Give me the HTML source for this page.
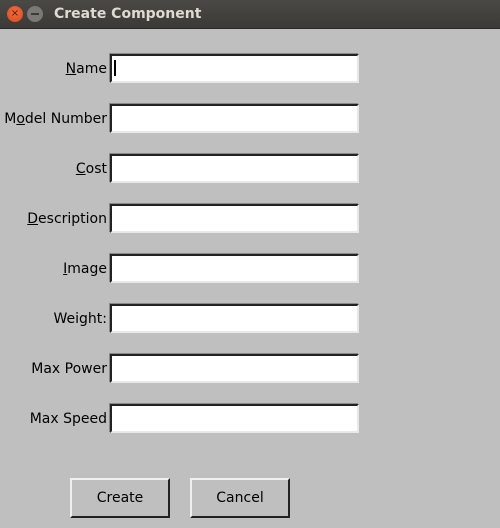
<!DOCTYPE html>
<html><head><style>
body{margin:0;width:500px;height:528px;background:#bfbfbf;font-family:"DejaVu Sans","Liberation Sans",sans-serif;font-size:14px;color:#000;position:relative;overflow:hidden}
.tb{position:absolute;left:0;top:0;width:500px;height:28px;background:linear-gradient(#4a4945,#3b3a36);border-bottom:1px solid #2a2926}
.tt{position:absolute;left:54px;top:6px;color:#dfdbd2;font-weight:bold;font-size:14px}
.c{position:absolute;top:6px;width:16px;height:16px;border-radius:50%}
.lb{position:absolute;right:393px;white-space:nowrap;line-height:16px}
.en{position:absolute;left:110px;width:245px;height:25px;background:#fff;border-top:2px solid #222;border-left:2px solid #222;border-right:2px solid #e8e8e8;border-bottom:2px solid #e8e8e8;box-sizing:content-box;}
.en{box-shadow:-1px -1px 0 #888}
.bt{position:absolute;top:478px;width:96px;height:36px;border-top:2px solid #f0f0f0;border-left:2px solid #f0f0f0;border-right:2px solid #222;border-bottom:2px solid #222;text-align:center;line-height:36px}
u{text-decoration:underline}
</style></head><body>
<div class="tb">
<div class="c" style="left:7px;background:radial-gradient(circle at 50% 40%,#f26d3d,#d94a1e);color:#4a1a08;font-size:10px;line-height:16px;text-align:center">×</div>
<div class="c" style="left:27px;background:#7a7974;"><div style="position:absolute;left:4px;top:7px;width:8px;height:2px;background:#3b3a36"></div></div>
<div class="tt">Create Component</div>
</div>
<div class="lb" style="top:61px"><u>N</u>ame</div>
<div class="en" style="top:54px"><div style="position:absolute;left:2px;top:4px;width:2px;height:16px;background:#000"></div></div>
<div class="lb" style="top:111px">M<u>o</u>del Number</div>
<div class="en" style="top:104px"></div>
<div class="lb" style="top:161px"><u>C</u>ost</div>
<div class="en" style="top:154px"></div>
<div class="lb" style="top:211px"><u>D</u>escription</div>
<div class="en" style="top:204px"></div>
<div class="lb" style="top:261px"><u>I</u>mage</div>
<div class="en" style="top:254px"></div>
<div class="lb" style="top:311px">Weight:</div>
<div class="en" style="top:304px"></div>
<div class="lb" style="top:361px">Max Power</div>
<div class="en" style="top:354px"></div>
<div class="lb" style="top:411px">Max Speed</div>
<div class="en" style="top:404px"></div>
<div class="bt" style="left:70px">Create</div>
<div class="bt" style="left:190px">Cancel</div>
</body></html>
